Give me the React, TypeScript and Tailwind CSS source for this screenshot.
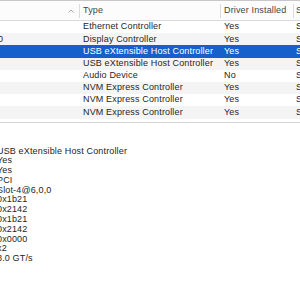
import React from "react";

const rows = [
  { a: "", t: "Ethernet Controller", d: "Yes" },
  { a: "0", t: "Display Controller", d: "Yes" },
  { a: "", t: "USB eXtensible Host Controller", d: "Yes", sel: true },
  { a: "", t: "USB eXtensible Host Controller", d: "Yes" },
  { a: "", t: "Audio Device", d: "No" },
  { a: "", t: "NVM Express Controller", d: "Yes" },
  { a: "", t: "NVM Express Controller", d: "Yes" },
  { a: "", t: "NVM Express Controller", d: "Yes" },
];

const details = [
  "USB eXtensible Host Controller",
  "Yes",
  "Yes",
  "PCI",
  "Slot-4@6,0,0",
  "0x1b21",
  "0x2142",
  "0x1b21",
  "0x2142",
  "0x0000",
  "x2",
  "8.0 GT/s",
];

export default function App() {
  return (
    <div
      className="w-[300px] h-[300px] overflow-hidden bg-white text-[9px] tracking-[0.15px] text-[#262626] flex flex-col"
      style={{ fontFamily: '"Liberation Sans", Arial, sans-serif' }}
    >
      {/* header */}
      <div className="h-[21px] shrink-0 flex items-center border-t border-b border-t-[#c8c8c8] border-b-[#dadada] bg-[#fcfcfc] text-[#454545] whitespace-nowrap">
        <div className="w-[80px] h-[14px] shrink-0 flex items-center justify-end pr-[5px] border-r border-[#dcdcdc]">
          <svg width="6" height="4" viewBox="0 0 6 4" className="block">
            <path d="M0.5 3.5 L3 1 L5.5 3.5" fill="none" stroke="#a8a8a8" strokeWidth="1" />
          </svg>
        </div>
        <div className="w-[141px] h-[14px] shrink-0 flex items-center pl-[3px] border-r border-[#dcdcdc]">Type</div>
        <div className="w-[73px] h-[14px] shrink-0 flex items-center pl-[3px] border-r border-[#dcdcdc]">Driver Installed</div>
        <div className="pl-[2px]">S</div>
      </div>
      {/* rows */}
      <div className="flex flex-col shrink-0">
        {rows.map((r, i) => (
          <div
            key={i}
            className={
              "h-[12.2px] flex items-center whitespace-nowrap overflow-hidden " +
              (r.sel ? "bg-[#1560cb] text-white" : i % 2 === 1 ? "bg-[#f4f4f4]" : "bg-white")
            }
          >
            <div className="w-[81px] shrink-0 overflow-hidden">
              <span className="ml-[-2px]">{r.a}</span>
            </div>
            <div className="w-[141px] shrink-0 pl-[2px]">{r.t}</div>
            <div className="w-[73px] shrink-0 pl-[2px]">{r.d}</div>
            <div className="pl-[1px]">S</div>
          </div>
        ))}
      </div>
      <div className="h-[3px] shrink-0" />
      <div className="h-[1px] shrink-0 bg-[#d4d4d4]" />
      {/* details */}
      <div className="mt-[24px] ml-[-3px] flex flex-col leading-[9.8px] whitespace-nowrap text-[#1e1e1e]">
        {details.map((d, i) => (
          <div key={i}>{d}</div>
        ))}
      </div>
    </div>
  );
}
